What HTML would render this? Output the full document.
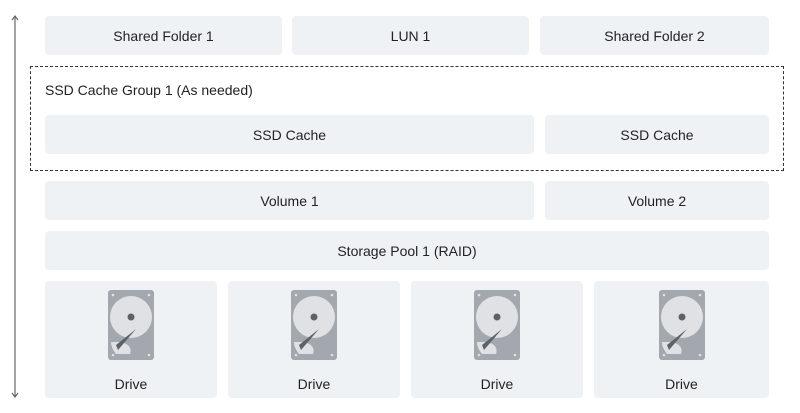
<!DOCTYPE html><html><head><style>
body{margin:0;width:800px;height:413px;background:#fff;font-family:"Liberation Sans",sans-serif;position:relative;overflow:hidden}
.b{position:absolute;background:#eff2f5;border-radius:4px;display:flex;align-items:center;justify-content:center;font-size:14px;color:#222}
.d{position:absolute;background:#eff2f5;border-radius:4px}
.d span{position:absolute;bottom:6px;left:0;right:0;text-align:center;font-size:14px;color:#222}
.d svg{position:absolute;left:50%;margin-left:-23px;top:9px}
</style></head><body>
<svg style="position:absolute;left:0;top:0" width="30" height="413"><line x1="15" y1="16" x2="15" y2="397" stroke="#666" stroke-width="1.2"/><path d="M12 20 L15 16 L18 20 M12 393 L15 397 L18 393" fill="none" stroke="#666" stroke-width="1.2"/></svg>
<div class="b" style="left:45px;top:16px;width:237px;height:39px">Shared Folder 1</div>
<div class="b" style="left:292px;top:16px;width:237px;height:39px">LUN 1</div>
<div class="b" style="left:540px;top:16px;width:229px;height:39px">Shared Folder 2</div>
<div style="position:absolute;left:30px;top:66px;width:752px;height:103px;border:1px dashed #333"></div>
<div style="position:absolute;left:45px;top:82px;font-size:14px;color:#222">SSD Cache Group 1 (As needed)</div>
<div class="b" style="left:45px;top:115px;width:489px;height:39px">SSD Cache</div>
<div class="b" style="left:545px;top:115px;width:224px;height:39px">SSD Cache</div>
<div class="b" style="left:45px;top:181px;width:489px;height:39px">Volume 1</div>
<div class="b" style="left:545px;top:181px;width:224px;height:39px">Volume 2</div>
<div class="b" style="left:45px;top:231px;width:724px;height:39px">Storage Pool 1 (RAID)</div>
<div class="d" style="left:45px;top:281px;width:172px;height:117px"><svg width="46" height="70"><rect width="46" height="70" rx="3" fill="#a3a7ae"/><circle cx="23" cy="27" r="21" fill="#e0e1e4"/><path d="M3 52 L13 52 Q25 55 22 64 L8 64 Q3 58 3 52Z" fill="#e0e1e4"/><circle cx="23" cy="27" r="3.5" fill="#5d6168"/><path d="M28 39 L10 60 L8 55 Z" fill="#5d6168"/><circle cx="5" cy="5" r="1.3" fill="#e0e1e4"/><circle cx="41" cy="5" r="1.3" fill="#e0e1e4"/><circle cx="5" cy="65" r="1.3" fill="#e0e1e4"/><circle cx="41" cy="65" r="1.3" fill="#e0e1e4"/></svg><span>Drive</span></div>
<div class="d" style="left:228px;top:281px;width:172px;height:117px"><svg width="46" height="70"><rect width="46" height="70" rx="3" fill="#a3a7ae"/><circle cx="23" cy="27" r="21" fill="#e0e1e4"/><path d="M3 52 L13 52 Q25 55 22 64 L8 64 Q3 58 3 52Z" fill="#e0e1e4"/><circle cx="23" cy="27" r="3.5" fill="#5d6168"/><path d="M28 39 L10 60 L8 55 Z" fill="#5d6168"/><circle cx="5" cy="5" r="1.3" fill="#e0e1e4"/><circle cx="41" cy="5" r="1.3" fill="#e0e1e4"/><circle cx="5" cy="65" r="1.3" fill="#e0e1e4"/><circle cx="41" cy="65" r="1.3" fill="#e0e1e4"/></svg><span>Drive</span></div>
<div class="d" style="left:411px;top:281px;width:172px;height:117px"><svg width="46" height="70"><rect width="46" height="70" rx="3" fill="#a3a7ae"/><circle cx="23" cy="27" r="21" fill="#e0e1e4"/><path d="M3 52 L13 52 Q25 55 22 64 L8 64 Q3 58 3 52Z" fill="#e0e1e4"/><circle cx="23" cy="27" r="3.5" fill="#5d6168"/><path d="M28 39 L10 60 L8 55 Z" fill="#5d6168"/><circle cx="5" cy="5" r="1.3" fill="#e0e1e4"/><circle cx="41" cy="5" r="1.3" fill="#e0e1e4"/><circle cx="5" cy="65" r="1.3" fill="#e0e1e4"/><circle cx="41" cy="65" r="1.3" fill="#e0e1e4"/></svg><span>Drive</span></div>
<div class="d" style="left:594px;top:281px;width:175px;height:117px"><svg width="46" height="70"><rect width="46" height="70" rx="3" fill="#a3a7ae"/><circle cx="23" cy="27" r="21" fill="#e0e1e4"/><path d="M3 52 L13 52 Q25 55 22 64 L8 64 Q3 58 3 52Z" fill="#e0e1e4"/><circle cx="23" cy="27" r="3.5" fill="#5d6168"/><path d="M28 39 L10 60 L8 55 Z" fill="#5d6168"/><circle cx="5" cy="5" r="1.3" fill="#e0e1e4"/><circle cx="41" cy="5" r="1.3" fill="#e0e1e4"/><circle cx="5" cy="65" r="1.3" fill="#e0e1e4"/><circle cx="41" cy="65" r="1.3" fill="#e0e1e4"/></svg><span>Drive</span></div>
</body></html>
